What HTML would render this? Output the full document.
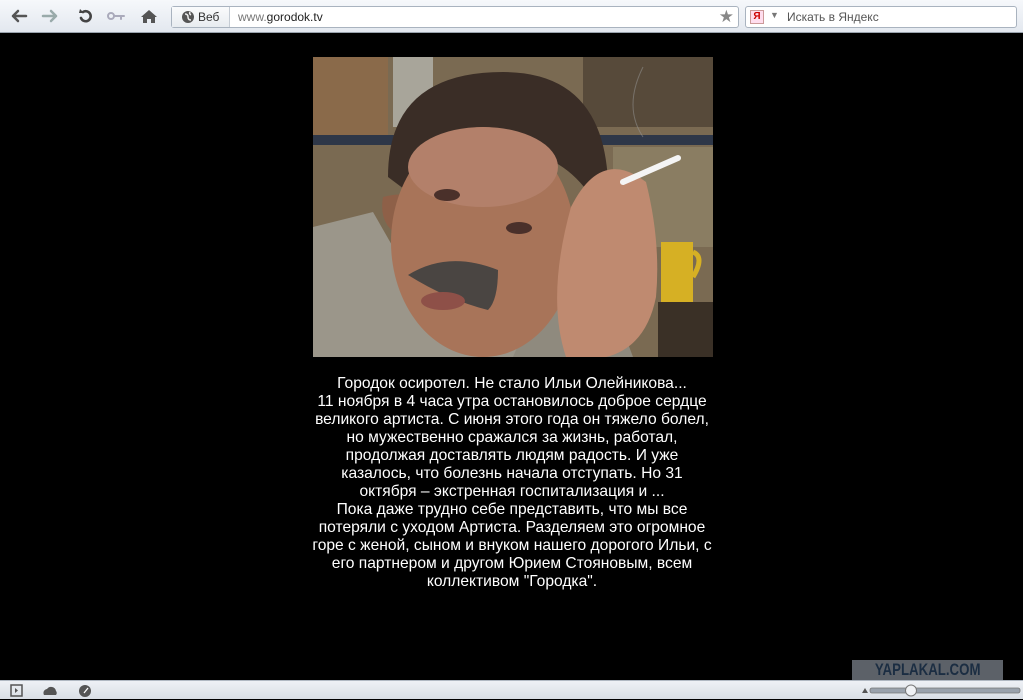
<!DOCTYPE html>
<html><head><meta charset="utf-8"><style>
*{margin:0;padding:0;box-sizing:border-box}
body{width:1023px;height:699px;background:#000;position:relative;overflow:hidden;font-family:"Liberation Sans",Arial,sans-serif}
#tb{position:absolute;left:0;top:0;width:1023px;height:33px;background:linear-gradient(#f6f8fb,#e3e8ef);border-bottom:1px solid #9aa3ad}
#url{position:absolute;left:171px;top:6px;width:568px;height:22px;border:1px solid #a9b3bf;border-radius:3px;background:#fff}
#web{position:absolute;left:0;top:0;width:58px;height:20px;border-right:1px solid #c5ccd4;background:linear-gradient(#fafbfc,#e8ecf0);font-size:12px;color:#333;padding:3px 0 0 26px}
#srch{position:absolute;left:745px;top:6px;width:272px;height:22px;border:1px solid #a9b3bf;border-radius:3px;background:#fff;font-size:12px;color:#555}
#bb{position:absolute;left:0;top:680px;width:1023px;height:19px;background:linear-gradient(#eef1f5,#d9dee5);border-top:1px solid #b0b8c2}
#txt{position:absolute;left:262px;top:375px;width:500px;text-align:center;color:#fff;font-size:15.6px;line-height:18px;white-space:nowrap}
#wm{position:absolute;left:852px;top:660px;width:151px;height:20px;background:#5c6168;color:#1b2d42;font-weight:bold;font-size:17px;text-align:center;line-height:20px;overflow:hidden}
#wm span{display:inline-block;transform:scaleX(.78)}
</style></head><body>
<div id="tb">
<svg width="170" height="33" style="position:absolute;left:0;top:0">
<g fill="none" stroke-linecap="round" stroke-linejoin="round">
<path d="M13 16h13M18 11l-5 5 5 5" stroke="#555" stroke-width="2.5"/>
<path d="M43 16h13M51 11l5 5-5 5" stroke="#9aa" stroke-width="2.5"/>
<path d="M81 18a5 5 0 1 0 2-6" stroke="#444" stroke-width="2.6"/>
<circle cx="111" cy="16" r="3" stroke="#aab" stroke-width="2"/><path d="M114 16h10M121 16v3" stroke="#aab" stroke-width="2"/>
</g>
<path d="M80 9l4 4h-5z" fill="#444"/>
<path d="M141 17l8-7 8 7h-2v6h-4v-4h-4v4h-4v-6z" fill="#555"/>
</svg>
<div id="url"><div id="web">Веб</div>
<svg width="14" height="14" style="position:absolute;left:9px;top:3px"><circle cx="7" cy="7" r="6" fill="#555"/><path d="M4 4q3 0 3 3t3 3M9 2q-1 2 1 3" stroke="#eee" stroke-width="1.5" fill="none"/></svg>
<span style="position:absolute;left:66px;top:3px;font-size:12px;color:#777">www.<span style="color:#222">gorodok.tv</span></span>
<span style="position:absolute;right:4px;top:0px;font-size:17px;color:#888">★</span></div>
<div id="srch"><span style="position:absolute;left:4px;top:3px;width:14px;height:14px;border:1px solid #c99;background:#fde;color:#c00;font-size:10px;font-weight:bold;text-align:center;line-height:12px">Я</span><span style="position:absolute;left:24px;top:3px;font-size:9px;color:#777">▼</span><span style="position:absolute;left:41px;top:3px">Искать в Яндекс</span></div>
</div>
<svg width="400" height="300" viewBox="0 0 400 300" style="position:absolute;left:313px;top:57px">
<rect width="400" height="300" fill="#7a6a52"/>
<rect width="75" height="80" fill="#8a6a4a"/>
<rect x="0" y="78" width="400" height="10" fill="#2e3748"/>
<rect x="80" y="0" width="40" height="70" fill="#a8a59a"/>
<rect x="270" y="0" width="130" height="70" fill="#574a3a"/>
<rect x="300" y="90" width="100" height="100" fill="#8a7d62"/>
<path d="M348 185h32v60h-32z" fill="#d6b024"/><path d="M380 195q12 5 0 25" stroke="#d6b024" stroke-width="5" fill="none"/>
<rect x="345" y="245" width="55" height="55" fill="#3a3026"/>
<path d="M0 170l60-15 20 35 150 100 40 10H0z" fill="#9b968a"/>
<path d="M230 230l60-10 30 80H200z" fill="#8f8a7e"/>
<path d="M75 120q0-105 115-105q100 0 105 110l-20 10q-60-80-180 0z" fill="#3a2d26"/>
<path d="M70 140q20-5 25 0l-5 40q-25-10-20-40z" fill="#8e6048"/>
<ellipse cx="170" cy="185" rx="92" ry="115" fill="#a87459"/>
<ellipse cx="170" cy="110" rx="75" ry="40" fill="#b3806a"/>
<ellipse cx="134" cy="138" rx="13" ry="6" fill="#4a302a"/>
<ellipse cx="206" cy="171" rx="13" ry="6" fill="#4a302a"/>
<path d="M95 218q40-25 90-5q0 30-10 40q-40-10-80-35z" fill="#4a4542"/>
<ellipse cx="130" cy="244" rx="22" ry="9" fill="#8e5048"/>
<path d="M258 150q30-60 75-25q15 60 10 115q-10 50-50 60h-40q-20-60 5-150z" fill="#bf8a70"/>
<path d="M310 125l55-24" stroke="#f4f4f4" stroke-width="6" stroke-linecap="round"/>
<path d="M330 80q-20-30 0-70" stroke="#999" stroke-width="1" fill="none" opacity=".5"/>
</svg>
<div id="txt">Городок осиротел. Не стало Ильи Олейникова...<br>11 ноября в 4 часа утра остановилось доброе сердце<br>великого артиста. С июня этого года он тяжело болел,<br>но мужественно сражался за жизнь, работал,<br>продолжая доставлять людям радость. И уже<br>казалось, что болезнь начала отступать. Но 31<br>октября – экстренная госпитализация и ...<br>Пока даже трудно себе представить, что мы все<br>потеряли с уходом Артиста. Разделяем это огромное<br>горе с женой, сыном и внуком нашего дорогого Ильи, с<br>его партнером и другом Юрием Стояновым, всем<br>коллективом "Городка".</div>
<div id="wm"><span>YAPLAKAL.COM</span></div>
<div id="bb">
<svg width="1023" height="19" style="position:absolute;left:0;top:0">
<rect x="11" y="4" width="11" height="11" fill="none" stroke="#555" stroke-width="1.5"/><path d="M15 7l3 2.5-3 2.5" fill="#555"/>
<path d="M44 14a4 4 0 0 1 3-6a5 5 0 0 1 9 2a3 3 0 0 1 0 4z" fill="#555"/>
<circle cx="85" cy="10" r="6" fill="#555"/><path d="M84 12l4-5" stroke="#fff" stroke-width="1.3"/>
<path d="M862 12l3-5 3 5z" fill="#555"/>
<rect x="870" y="7" width="150" height="5" rx="2" fill="#9aa2ac" stroke="#777" stroke-width=".8"/>
<circle cx="911" cy="9.5" r="5.5" fill="#f0f2f5" stroke="#777"/>
</svg>
</div>
</body></html>
